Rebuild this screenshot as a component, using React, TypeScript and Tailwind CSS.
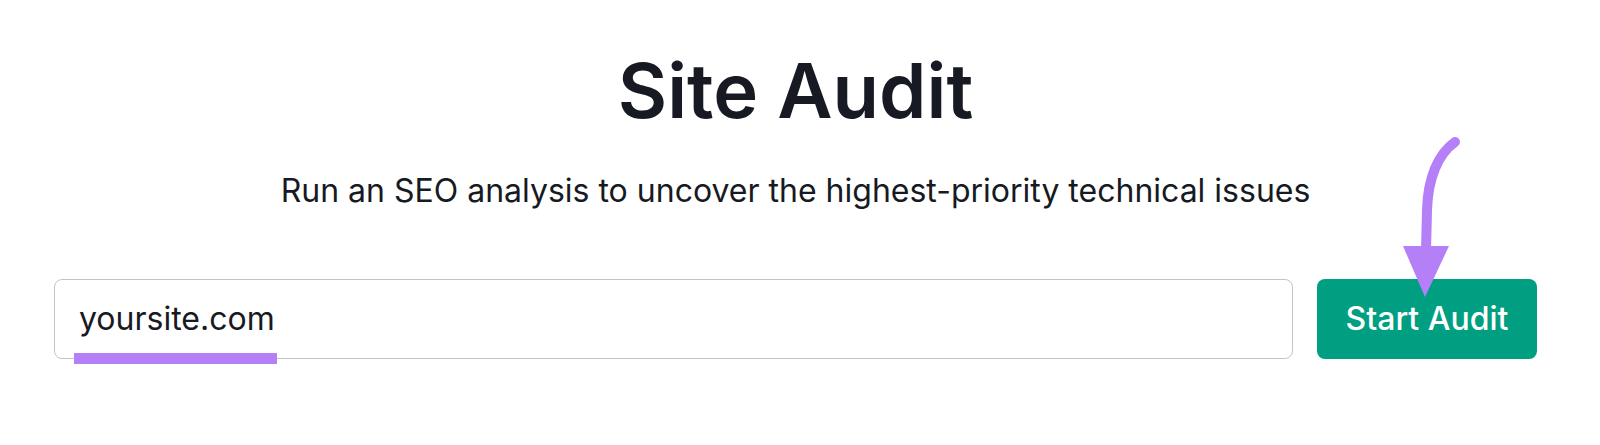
const App = () => {
  return (
    <div className="relative w-[1600px] h-[445px] bg-white overflow-hidden" style={{ fontFamily: "Inter, 'Noto Sans', sans-serif" }}>
      <div className="ml-[54px] w-[1483px] flex flex-col items-center">
        <h1 className="mt-[52px] text-[76px] leading-none font-semibold text-[#171a22]">Site Audit</h1>
        <p className="mt-[47px] text-[32px] leading-none text-[#171a22]">
          Run an SEO analysis to uncover the highest-priority technical issues
        </p>
        <div className="mt-[72px] w-full flex gap-6">
          <div className="relative w-[1239px] h-[80px] rounded-lg border border-[#c2c4cb] flex items-center pl-6">
            <span className="text-[32px] text-[#171a22]">yoursite.com</span>
            <div className="absolute left-[19px] top-[73px] w-[203px] h-[11px] bg-[#b57ff7]" />
          </div>
          <button className="w-[220px] h-[80px] rounded-lg bg-[#009f81] text-white text-[32px] font-medium flex items-center justify-center">
            Start Audit
          </button>
        </div>
      </div>
      <svg className="absolute left-0 top-0" width="1600" height="445" viewBox="0 0 1600 445" fill="none">
        <path d="M1455 142 C1438 154 1428 178 1427 210 L1426 250" stroke="#b57ff7" strokeWidth="10" strokeLinecap="round" />
        <path d="M1403 246 L1449 246 L1425 297 Z" fill="#b57ff7" />
      </svg>
    </div>
  );
};

export default App;
